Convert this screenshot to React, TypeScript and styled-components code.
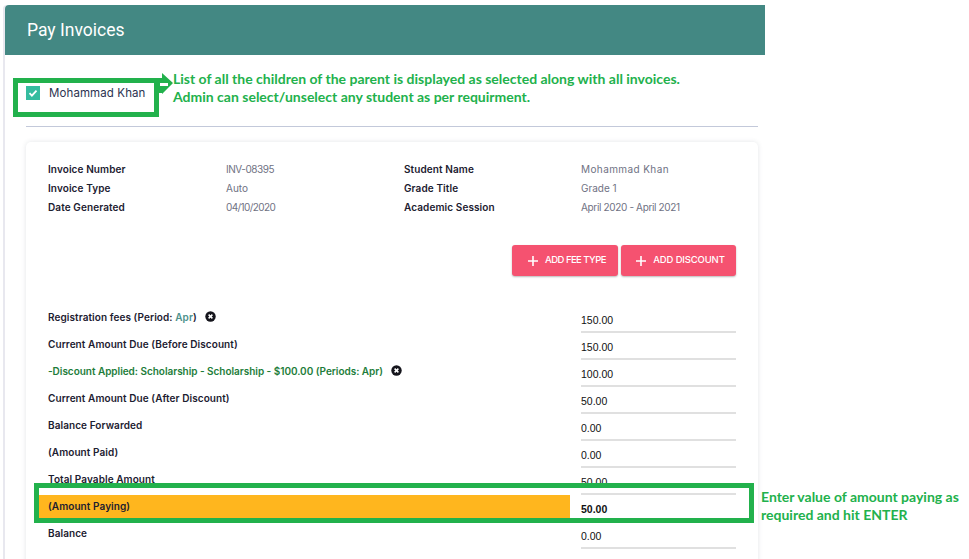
import React from "react";
import styled, { createGlobalStyle } from "styled-components";

const Global = createGlobalStyle`
  html, body { margin: 0; padding: 0; background: #fff; }
  #root { width: 969px; height: 559px; overflow: hidden; }
`;

const Page = styled.div`
  position: relative;
  width: 969px;
  height: 559px;
  overflow: hidden;
  padding: 5px 0 0 5px;
  box-sizing: border-box;
  background: #fff;
  font-family: "Inter", "Open Sans", sans-serif;
`;

const Panel = styled.section`
  width: 760px;
  height: 600px;
  background: #fff;
  box-shadow: -2px 0 0 #e8e8ef;
  border-radius: 4px 0 0 0;
`;

const Header = styled.header`
  height: 50px;
  background: #438883;
  border-radius: 4px 0 0 0;
  display: flex;
  align-items: center;
  padding-left: 22px;
  color: #fff;
  font-family: "Roboto", sans-serif;
  font-size: 17.5px;
`;

const Content = styled.div`
  padding: 0 7px 0 21px;
`;

const StudentRow = styled.div`
  height: 72px;
  display: flex;
  align-items: flex-start;
  padding-top: 31px;
  box-sizing: border-box;
  border-bottom: 1px solid #c3c9da;
  gap: 9px;
`;

const CheckBox = styled.span`
  width: 14px;
  height: 14px;
  background: #35bc9f;
  display: flex;
  align-items: center;
  justify-content: center;
`;

const StudentName = styled.span`
  font-size: 11.5px;
  letter-spacing: 0.1px;
  color: #2b3350;
  line-height: 15px;
`;

const Card = styled.div`
  margin-top: 15px;
  border-radius: 5px;
  background: #fff;
  box-shadow: 0 0 5px rgba(60, 70, 90, 0.14);
  padding: 17px 22px 40px;
`;

const InfoGrid = styled.div`
  display: grid;
  grid-template-columns: 178px 178px 177px 1fr;
  grid-auto-rows: 19px;
  align-items: center;
  font-size: 10px;
`;

const InfoLabel = styled.span`
  font-weight: 600;
  letter-spacing: 0.1px;
  color: #1c2030;
`;

const InfoValue = styled.span<{ $sp: number }>`
  color: #6f7283;
  font-weight: 400;
  letter-spacing: ${(p) => p.$sp}px;
`;

const Actions = styled.div`
  margin-top: 29px;
  display: flex;
  justify-content: flex-end;
  gap: 3px;
`;

const AddButton = styled.button<{ $w: number; $sp: number }>`
  width: ${(p) => p.$w}px;
  height: 31px;
  border: 0;
  border-radius: 3px;
  background: #f55270;
  color: #fff;
  font-family: "Inter", sans-serif;
  font-size: 9.5px;
  font-weight: 500;
  letter-spacing: ${(p) => p.$sp}px;
  display: flex;
  align-items: center;
  justify-content: center;
  gap: 6px;
  padding: 0 0 0 3px;
  box-shadow: 0 1px 2px rgba(0, 0, 0, 0.28);
`;

const ButtonText = styled.span`
  padding-bottom: 2px;
`;

const Rows = styled.div`
  margin-top: 30px;
`;

const Row = styled.div<{ $hl?: boolean }>`
  height: 27px;
  display: flex;
  align-items: stretch;
  margin-left: ${(p) => (p.$hl ? "-9px" : "0")};
`;

const RowLabel = styled.div<{ $hl?: boolean; $green?: boolean }>`
  width: ${(p) => (p.$hl ? "531px" : "533px")};
  margin-right: ${(p) => (p.$hl ? "11px" : "0")};
  padding-left: ${(p) => (p.$hl ? "9px" : "0")};
  box-sizing: border-box;
  font-size: 10px;
  font-weight: 600;
  letter-spacing: ${(p) => (p.$green ? "-0.03px" : "0.08px")};
  color: ${(p) => (p.$green ? "#1d7d3a" : "#1c2030")};
  background: ${(p) => (p.$hl ? "#ffb61e" : "transparent")};
  display: flex;
  align-items: ${(p) => (p.$hl ? "center" : "flex-start")};
  padding-top: ${(p) => (p.$hl ? "0" : "5px")};
  padding-bottom: ${(p) => (p.$hl ? "2px" : "0")};
  height: ${(p) => (p.$hl ? "23px" : "auto")};
  gap: 8px;
`;

const Period = styled.span`
  color: #4d918c;
`;

const RowValue = styled.div<{ $strong?: boolean }>`
  width: 155px;
  height: 27px;
  box-sizing: border-box;
  border-bottom: 2px solid #e0e0e0;
  font-family: "Liberation Sans", sans-serif;
  font-size: 10.5px;
  font-weight: ${(p) => (p.$strong ? 700 : 400)};
  color: #111;
  padding-top: 8px;
  line-height: 12px;
`;

const Highlight = styled.div<{ $x: number; $y: number; $w: number; $h: number }>`
  position: absolute;
  left: ${(p) => p.$x}px;
  top: ${(p) => p.$y}px;
  width: ${(p) => p.$w}px;
  height: ${(p) => p.$h}px;
  box-sizing: border-box;
  border: 5px solid #22b14c;
`;

const Note = styled.div<{ $x: number; $y: number }>`
  position: absolute;
  left: ${(p) => p.$x}px;
  top: ${(p) => p.$y}px;
  color: #22b14c;
  font-family: "Lato", sans-serif;
  font-weight: 700;
  font-size: 14px;
  line-height: 18px;
  white-space: nowrap;
`;

const Arrow = styled.svg`
  position: absolute;
  left: 157px;
  top: 72px;
`;

const Plus = () => (
  <svg width="12" height="12" viewBox="0 0 12 12">
    <path d="M6 1v10M1 6h10" stroke="#fff" strokeWidth="1.6" />
  </svg>
);

const Remove = () => (
  <svg width="11" height="11" viewBox="0 0 11 11">
    <circle cx="5.5" cy="5.5" r="5.2" fill="#15151c" />
    <path d="M3.6 3.6l3.8 3.8M7.4 3.6l-3.8 3.8" stroke="#fff" strokeWidth="1.5" />
  </svg>
);

const info: [string, string, number, string, string, number][] = [
  ["Invoice Number", "INV-08395", -0.45, "Student Name", "Mohammad Khan", 0.4],
  ["Invoice Type", "Auto", 0, "Grade Title", "Grade 1", 0],
  ["Date Generated", "04/10/2020", -0.6, "Academic Session", "April 2020 - April 2021", -0.35],
];

export default function App() {
  return (
    <Page>
      <Global />
      <Panel>
        <Header>Pay Invoices</Header>
        <Content>
          <StudentRow>
            <CheckBox>
              <svg width="10" height="10" viewBox="0 0 10 10">
                <path d="M1.5 5.2l2.4 2.4 4.6-5" stroke="#fff" strokeWidth="1.8" fill="none" />
              </svg>
            </CheckBox>
            <StudentName>Mohammad Khan</StudentName>
          </StudentRow>
          <Card>
            <InfoGrid>
              {info.map((r) => (
                <React.Fragment key={r[0]}>
                  <InfoLabel>{r[0]}</InfoLabel>
                  <InfoValue $sp={r[2]}>{r[1]}</InfoValue>
                  <InfoLabel>{r[3]}</InfoLabel>
                  <InfoValue $sp={r[5]}>{r[4]}</InfoValue>
                </React.Fragment>
              ))}
            </InfoGrid>
            <Actions>
              <AddButton $w={106} $sp={-0.55}><Plus /><ButtonText>ADD FEE TYPE</ButtonText></AddButton>
              <AddButton $w={115} $sp={-0.15}><Plus /><ButtonText>ADD DISCOUNT</ButtonText></AddButton>
            </Actions>
            <Rows>
              <Row>
                <RowLabel><span>Registration fees (Period: <Period>Apr</Period>)</span><Remove /></RowLabel>
                <RowValue>150.00</RowValue>
              </Row>
              <Row>
                <RowLabel>Current Amount Due (Before Discount)</RowLabel>
                <RowValue>150.00</RowValue>
              </Row>
              <Row>
                <RowLabel $green><span>-Discount Applied: Scholarship - Scholarship - $100.00 (Periods: Apr)</span><Remove /></RowLabel>
                <RowValue>100.00</RowValue>
              </Row>
              <Row>
                <RowLabel>Current Amount Due (After Discount)</RowLabel>
                <RowValue>50.00</RowValue>
              </Row>
              <Row>
                <RowLabel>Balance Forwarded</RowLabel>
                <RowValue>0.00</RowValue>
              </Row>
              <Row>
                <RowLabel>(Amount Paid)</RowLabel>
                <RowValue>0.00</RowValue>
              </Row>
              <Row>
                <RowLabel>Total Payable Amount</RowLabel>
                <RowValue>50.00</RowValue>
              </Row>
              <Row $hl>
                <RowLabel $hl>(Amount Paying)</RowLabel>
                <RowValue $strong>50.00</RowValue>
              </Row>
              <Row>
                <RowLabel>Balance</RowLabel>
                <RowValue>0.00</RowValue>
              </Row>
            </Rows>
          </Card>
        </Content>
      </Panel>
      <Highlight $x={13} $y={78} $w={146} $h={39} />
      <Arrow width="17" height="23" viewBox="0 0 17 23">
        <path d="M0 6h5V1l11 10L5 22v-1H0z" fill="#22b14c" />
        <path d="M3 11h8v3H3z" fill="#fff" />
      </Arrow>
      <Note $x={173} $y={70}>
        List of all the children of the parent is displayed as selected along with all invoices.
        <br />
        Admin can select/unselect any student as per requirment.
      </Note>
      <Highlight $x={34} $y={483} $w={720} $h={40} />
      <Note $x={761} $y={488}>
        Enter value of amount paying as
        <br />
        required and hit ENTER
      </Note>
    </Page>
  );
}
